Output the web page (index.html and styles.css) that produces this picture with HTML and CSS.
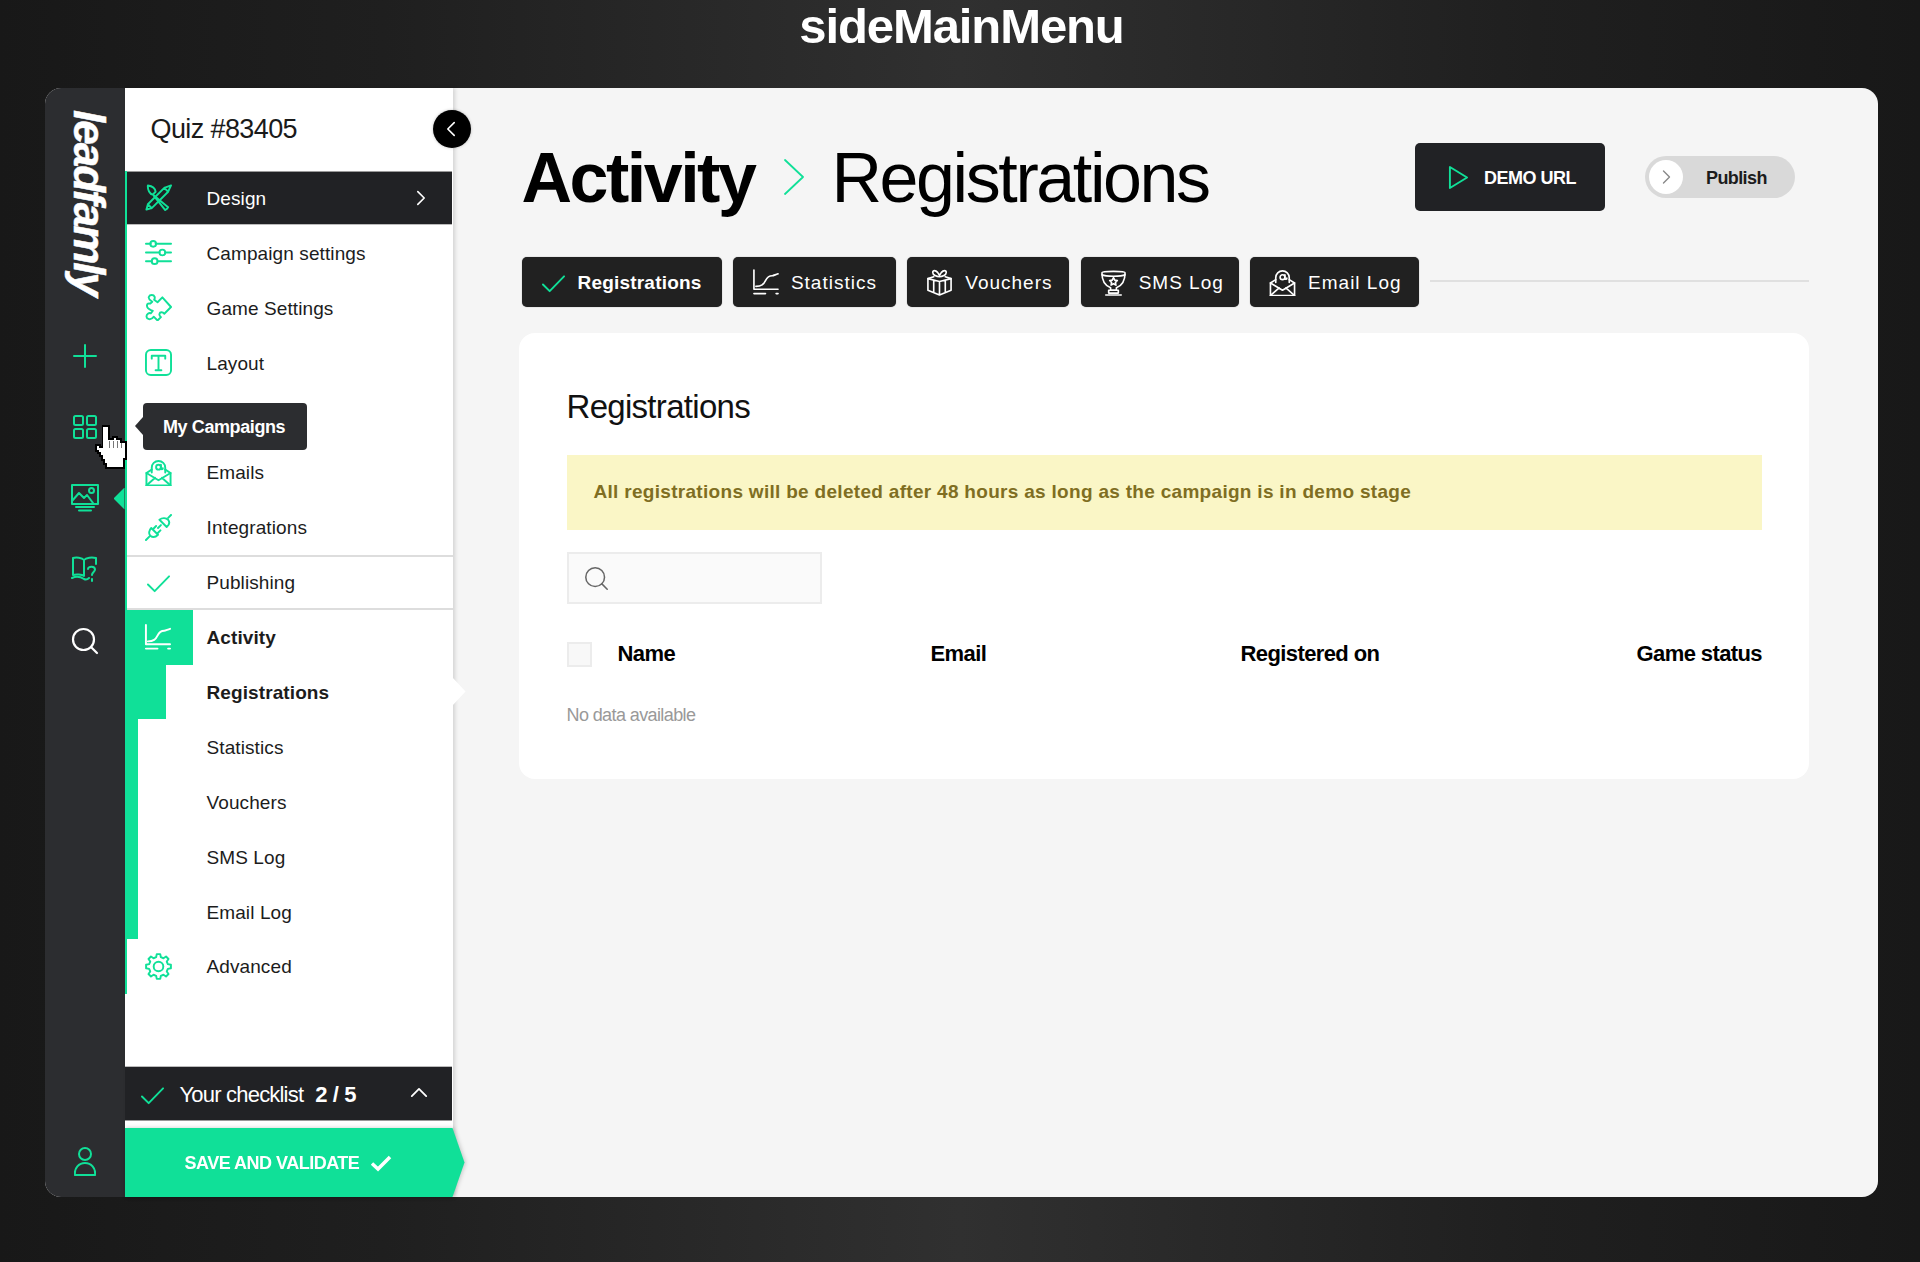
FILE: index.html
```html
<!DOCTYPE html>
<html lang="en">
<head>
<meta charset="utf-8">
<title>sideMainMenu</title>
<link rel="stylesheet" href="styles.css">
</head>
<body>
<svg class="sprite" aria-hidden="true">
  <defs>
    <symbol id="i-design" viewBox="0 0 28 28"><path d="M27 1.500 20 4 3 21 1.500 26.500 7 25 24 8ZM20 4l4 4M3 21l4 4"/><path d="M3 1.500c4 .5 7.500 3 8 6.500l-3 3C5 10.500 2.500 6 3 1.500ZM8 11l16 13-1.500 2-1.500 1-12-15"/></symbol>
    <symbol id="i-sliders" viewBox="0 0 28 28"><path d="M1 5h5M11 5h16M1 14h14M21 14h6M1 23h6M13 23h14"/><circle cx="8.500" cy="5" r="3"/><circle cx="18" cy="14" r="3"/><circle cx="10" cy="23" r="3"/></symbol>
    <symbol id="i-puzzle" viewBox="0 0 28 28"><path d="M18 3.500 27 13.500 20 20.500C18.500 18.500 15.500 18.500 15 20.500 14.500 22 15.500 23 16.500 24L13 27.500 9 23.500C8 25 6.500 26.500 4 26 1 25.500 1 22 3 20.500 4 19.800 5 19.500 6 20L8 17.500C6 16.500 2 16 2 12 2 10 4 9.500 5.500 10L7.500 8C5.500 6.500 3 5 4 3 5 .5 9 .5 10 3 10.300 4 10 5 9.500 6L13 8.500Z"/></symbol>
    <symbol id="i-layout" viewBox="0 0 28 28"><rect x="1" y="1" width="26" height="26" rx="5"/><path d="M7 10V7h14v3M14 7v15M11 22h6"/></symbol>
    <symbol id="i-mail" viewBox="0 0 28 28"><path d="M7 11 1.500 14.500V27.500H26.500V14.500L21 11"/><path d="M1.500 14.500 14 22l12.500-7.500M1.500 27.500 10.500 19.500M26.500 27.500 17.500 19.500"/><path d="M7 14V9a7 7 0 1 1 14 0v5"/><circle cx="14" cy="8.500" r="2.500"/><path d="M16.500 6v3.500c0 1.500 2 1.500 2 0"/></symbol>
    <symbol id="i-plug" viewBox="0 0 28 28"><path d="M1 27l4-4M27 1l-3 3M11.500 12.500l-3 3M16 17l-3 3M13.500 14.500l3-3"/><path d="M6.500 14.500 13.500 21.500C11 24 8 24.500 5.500 22.500 3.500 20.500 4 17 6.500 14.500Z"/><path d="M15 6l7.500 7.500C25.500 11 25.500 8 24 6 22 4 18 3.500 15 6Z"/></symbol>
    <symbol id="i-check" viewBox="0 0 24 18"><path d="M1 9.500 8 16.500 23 1"/></symbol>
    <symbol id="i-chart" viewBox="0 0 28 28"><path d="M2 1V21H27"/><path d="M4 18C10 18 12 16 14 12 16 8 19 7 21 7 22 7 24 6 27 5"/><path d="M2 25.500H14M25 25.500h2"/></symbol>
    <symbol id="i-gear" viewBox="0 0 28 28"><polygon transform="translate(14 14)" points="12.870,-1.810 12.870,1.810 9.700,2.420 8.570,5.150 10.380,7.820 7.820,10.380 5.150,8.570 2.420,9.700 1.810,12.870 -1.810,12.870 -2.420,9.700 -5.150,8.570 -7.820,10.380 -10.380,7.820 -8.570,5.150 -9.700,2.420 -12.870,1.810 -12.870,-1.810 -9.700,-2.420 -8.570,-5.150 -10.380,-7.820 -7.820,-10.380 -5.150,-8.570 -2.420,-9.700 -1.810,-12.870 1.810,-12.870 2.420,-9.700 5.150,-8.570 7.820,-10.380 10.380,-7.820 8.570,-5.150 9.700,-2.420"/><circle cx="14" cy="14" r="5"/></symbol>
    <symbol id="i-gift" viewBox="0 0 28 28"><path d="M2 10 14 13 26 10V22L14 27 2 22ZM14 13V27M8 11.500V24.500M20 11.500V24.500"/><path d="M2 10 8 8M26 10 20 8"/><path d="M14 8C11 8 7 6 7 3.500 7 1 10 1 12 3.500L14 6.500 16 3.500C18 1 21 1 21 3.500 21 6 17 8 14 8Z"/></symbol>
    <symbol id="i-trophy" viewBox="0 0 28 28"><path d="M2 4C2 2 26 2 26 4 26 10 24 17 17 19.500V22H11V19.500C4 17 2 10 2 4Z"/><path d="M2 6C6 8 22 8 26 6M9 22H19V25H9ZM6 27H22"/><path d="M14 9l1.300 2.600 2.700.3-2 2 .5 2.800-2.500-1.300-2.500 1.300.5-2.800-2-2 2.700-.3Z"/></symbol>
    <symbol id="i-play" viewBox="0 0 22 26"><path d="M2 2V24L20 13Z"/></symbol>
    <symbol id="i-search" viewBox="0 0 28 28"><circle cx="12.500" cy="12.500" r="10.500"/><path d="M20 20l6 6"/></symbol>
  </defs>
</svg>

<h1 class="page-title">sideMainMenu</h1>

<div class="window">
  <nav class="rail">
    <div class="logo">leadfamly</div>
    <a class="rail-item"><svg class="ic ic-rail" viewBox="0 0 24 24"><path d="M12 1V23M1 12H23"/></svg></a>
    <a class="rail-item"><svg class="ic ic-rail" viewBox="0 0 24 24"><rect x="1" y="1" width="9" height="9" rx="1.500"/><rect x="14" y="1" width="9" height="9" rx="1.500"/><rect x="1" y="14" width="9" height="9" rx="1.500"/><rect x="14" y="14" width="9" height="9" rx="1.500"/></svg></a>
    <a class="rail-item rail-active"><svg class="ic ic-rail-lg" viewBox="0 0 28 28"><rect x="1" y="1" width="26" height="19"/><path d="M1 17 8 9l5 5 3-3 6 8"/><circle cx="20.500" cy="6.500" r="2.500"/><path d="M5 23H23M8 26.500H20"/></svg></a>
    <a class="rail-item"><svg class="ic ic-rail-lg" viewBox="0 0 28 28"><path d="M13 5C11 2.500 5 2 2 3V20C5 19 11 19.500 13 21ZM13 5C15 2.500 21 2 25 3V9"/><path d="M1 23C5 21 10 22 13 24 15 25 17 24 18 23"/><path d="M17 14c0-3 7-3 7 .5 0 2.500-3 2.500-3 5.500M21 24v2"/></svg></a>
    <a class="rail-item rail-white"><svg class="ic ic-rail-lg ic-bold"><use href="#i-search"/></svg></a>
    <a class="rail-item rail-user"><svg class="ic ic-user" viewBox="0 0 22 30"><circle cx="11" cy="7" r="6"/><path d="M1 28C0 21 5 16 11 16S22 21 21 28Z"/></svg></a>
  </nav>

  <aside class="side">
    <header class="side-head">
      <span class="quiz">Quiz #83405</span>
      <button class="collapse"><svg class="ic ic-chev" viewBox="0 0 12 20"><path d="M10 2 2 10l8 8"/></svg></button>
    </header>

    <ul class="menu">
      <li class="row row-dark"><span class="cell"><svg class="ic ic-menu"><use href="#i-design"/></svg></span><span class="label">Design</span><svg class="ic ic-more" viewBox="0 0 12 20"><path d="M2 2l8 8-8 8"/></svg></li>
      <li class="row"><span class="cell"><svg class="ic ic-menu"><use href="#i-sliders"/></svg></span><span class="label">Campaign settings</span></li>
      <li class="row"><span class="cell"><svg class="ic ic-menu"><use href="#i-puzzle"/></svg></span><span class="label">Game Settings</span></li>
      <li class="row"><span class="cell"><svg class="ic ic-menu"><use href="#i-layout"/></svg></span><span class="label">Layout</span></li>
      <li class="row"></li>
      <li class="row"><span class="cell"><svg class="ic ic-menu"><use href="#i-mail"/></svg></span><span class="label">Emails</span></li>
      <li class="row"><span class="cell"><svg class="ic ic-menu"><use href="#i-plug"/></svg></span><span class="label">Integrations</span></li>
      <li class="row row-lined"><span class="cell"><svg class="ic ic-tick"><use href="#i-check"/></svg></span><span class="label">Publishing</span></li>
      <li class="row row-active"><span class="cell cell-green"><svg class="ic ic-menu ic-white"><use href="#i-chart"/></svg></span><span class="label label-bold">Activity</span></li>
      <li class="row row-sub row-current"><span class="bar"></span><span class="label label-bold">Registrations</span></li>
      <li class="row row-sub"><span class="bar"></span><span class="label">Statistics</span></li>
      <li class="row row-sub"><span class="bar"></span><span class="label">Vouchers</span></li>
      <li class="row row-sub"><span class="bar"></span><span class="label">SMS Log</span></li>
      <li class="row row-sub"><span class="bar"></span><span class="label">Email Log</span></li>
      <li class="row"><span class="cell"><svg class="ic ic-menu"><use href="#i-gear"/></svg></span><span class="label">Advanced</span></li>
    </ul>

    <div class="checklist">
      <svg class="ic ic-tick"><use href="#i-check"/></svg>
      <span class="check-text">Your checklist</span>
      <b class="check-count">2 / 5</b>
      <svg class="ic ic-up" viewBox="0 0 20 12"><path d="M2 10l8-8 8 8"/></svg>
    </div>

    <div class="save-wrap">
      <button class="save"><span class="save-text">SAVE AND VALIDATE</span> <svg class="ic-save" viewBox="0 0 22 18"><path d="M2 9.500 8 15 20 3"/></svg></button>
    </div>
  </aside>

  <main class="main">
    <header class="top">
      <div class="crumbs">
        <span class="crumb-strong">Activity</span>
        <svg class="ic ic-crumb" viewBox="0 0 20 36"><path d="M1 1 19 18 1 35"/></svg>
        <span class="crumb-light">Registrations</span>
      </div>
      <div class="actions">
        <button class="demo"><svg class="ic ic-play"><use href="#i-play"/></svg><span class="btn-text">DEMO URL</span></button>
        <button class="publish"><span class="knob"><svg class="ic ic-knob" viewBox="0 0 12 20"><path d="M2 2l8 8-8 8"/></svg></span><span class="btn-text">Publish</span></button>
      </div>
    </header>

    <div class="tabs">
      <a class="tab tab-on"><svg class="ic ic-tick"><use href="#i-check"/></svg><span class="tab-text">Registrations</span></a>
      <a class="tab"><svg class="ic ic-tab"><use href="#i-chart"/></svg><span class="tab-text">Statistics</span></a>
      <a class="tab"><svg class="ic ic-tab"><use href="#i-gift"/></svg><span class="tab-text">Vouchers</span></a>
      <a class="tab"><svg class="ic ic-tab"><use href="#i-trophy"/></svg><span class="tab-text">SMS Log</span></a>
      <a class="tab"><svg class="ic ic-tab"><use href="#i-mail"/></svg><span class="tab-text">Email Log</span></a>
      <span class="tab-line"></span>
    </div>

    <section class="card">
      <h2 class="card-title">Registrations</h2>
      <p class="notice">All registrations will be deleted after 48 hours as long as the campaign is in demo stage</p>
      <div class="search"><svg class="ic ic-find"><use href="#i-search"/></svg></div>
      <div class="thead">
        <span class="checkbox"></span>
        <span>Name</span>
        <span>Email</span>
        <span>Registered on</span>
        <span>Game status</span>
      </div>
      <p class="empty">No data available</p>
    </section>
  </main>

  <div class="tooltip">My Campaigns</div>
  <svg class="hand" viewBox="0 0 32 44"><path d="M7.500 1H14V14H18V12H22V14H26V17H31V34H29V43H11V39H9V35H7V31H5V28H3V26H1V20H5V22H7.500Z"/><path d="M14 16V23M18 16V23M22 16V23M26 18V23"/></svg>
</div>
</body>
</html>
```
FILE: styles.css
```css
* { box-sizing: border-box; }
html, body { margin: 0; height: 100%; }
body {
  height: 1262px;
  overflow: hidden;
  font-family: "Liberation Sans", Arial, sans-serif;
  color: #1c1c1c;
  background: linear-gradient(90deg, #181818 0%, #1f1f1f 20%, #303030 50%, #1f1f1f 80%, #181818 100%);
}
.sprite { position: absolute; width: 0; height: 0; }
ul { list-style: none; margin: 0; padding: 0; }
button { font-family: inherit; border: 0; padding: 0; }

.page-title {
  margin: 0;
  height: 88px;
  padding: 1px 0 0 3px;
  text-align: center;
  font-size: 49px;
  line-height: 50px;
  font-weight: 700;
  letter-spacing: -1.100px;
  color: #fff;
}

.window {
  position: relative;
  display: flex;
  width: 1833px;
  height: 1109px;
  margin-left: 45px;
  border-radius: 16px;
  background: #f5f5f5;
}

/* icon base */
.ic { fill: none; stroke: currentColor; stroke-width: 2; stroke-linecap: round; stroke-linejoin: round; flex: none; }

/* rail */
.rail {
  flex: 0 0 79.500px;
  display: flex;
  flex-direction: column;
  align-items: stretch;
  background: #2c2d30;
  border-radius: 16px 0 0 16px;
  color: #10e098;
}
.logo {
  height: 232px;
  margin: 0 -4px 0 4px;
  padding-top: 22px;
  writing-mode: vertical-rl;
  font-size: 44px;
  line-height: 79px;
  font-weight: 700;
  font-style: italic;
  letter-spacing: -2px;
  color: #fff;
  -webkit-text-stroke: .5px #fff;
}
.rail-item {
  position: relative;
  height: 71.250px;
  display: flex;
  align-items: center;
  justify-content: center;
}
.rail-white { color: #fff; }
.rail-user { margin-top: auto; height: 70px; }
.rail-active::after {
  content: "";
  position: absolute;
  right: 0;
  top: 25px;
  width: 11px;
  height: 22px;
  background: #10e098;
  clip-path: polygon(0 50%, 100% 0, 100% 100%);
}
.ic-rail { width: 24px; height: 24px; }
.ic-rail-lg { width: 28px; height: 28px; }
.ic-bold { stroke-width: 2.200px; }
.ic-user { width: 22px; height: 30px; }

/* sidebar */
.side {
  position: relative;
  z-index: 2;
  flex: 0 0 328px;
  display: flex;
  flex-direction: column;
  background: #fff;
  box-shadow: 2px 0 4px rgba(0,0,0,.14);
}
.side-head {
  position: relative;
  flex: 0 0 82.500px;
  display: flex;
  align-items: center;
  padding-left: 26px;
}
.quiz { font-size: 27px; letter-spacing: -0.600px; color: #1a1a1a; }
.collapse {
  position: absolute;
  right: -18px;
  top: 22px;
  width: 38px;
  height: 38px;
  border-radius: 50%;
  background: #000;
  color: #fff;
  display: flex;
  align-items: center;
  justify-content: center;
  box-shadow: 0 0 3px rgba(0,0,0,.25);
}
.ic-chev { width: 10px; height: 16px; margin-right: 2px; }

.menu { border-left: 2px solid #10e098; flex: 0 0 823.500px; color: #10e098; }
.row {
  position: relative;
  height: 54.900px;
  display: flex;
  align-items: center;
  font-size: 19px;
  letter-spacing: .100px;
  color: #1c1c1c;
}
.cell {
  flex: 0 0 64px;
  height: 100%;
  display: flex;
  align-items: center;
  justify-content: center;
  color: #10e098;
}
.label { margin-left: 16px; padding-top: 2px; }
.label-bold { font-weight: 700; }
.ic-menu { width: 27px; height: 27px; }
.ic-tick { width: 23px; height: 18px; margin-top: 4px; color: #10e098; }
.ic-white { color: #fff; }
.ic-more { width: 10px; height: 16px; margin-left: auto; margin-right: 26px; color: #fff; }

.row-dark { background: #212225; color: #fff; margin-right: 1px; border-top: 1px solid #999; border-bottom: 1px solid #bbb; }
.row-lined { border-top: 2px solid #ddd; border-bottom: 2px solid #ddd; }
.row-active .cell-green { flex-basis: 68px; margin-left: -2px; padding-right: 2px; background: #10e098; }
.row-active .label { margin-left: 14px; }
.row-sub { display: grid; grid-template-columns: 80px 1fr; align-items: center; }
.row-sub .label { margin-left: 0; }
.bar { height: 100%; background: #10e098; margin-left: -2px; width: 13px; }
.row-current .bar { width: 41px; }
.row-current::after {
  content: "";
  position: absolute;
  right: -13px;
  top: 13px;
  width: 13px;
  height: 28px;
  background: #fff;
  clip-path: polygon(0 0, 100% 50%, 0 100%);
}

.checklist {
  display: flex;
  align-items: center;
  height: 55px;
  margin-top: auto;
  margin-right: 1px;
  padding-left: 16px;
  background: #212225;
  color: #fff;
  border-top: 1px solid #bbb;
  border-bottom: 1px solid #999;
}
.check-text { margin-left: 16px; padding-top: 2px; font-size: 22px; letter-spacing: -0.800px; }
.check-count { margin-left: 12px; padding-top: 2px; font-size: 22px; font-weight: 700; letter-spacing: -0.400px; }
.ic-up { width: 18px; height: 11px; margin-left: auto; margin-right: 24px; margin-bottom: 3px; }

.save-wrap { margin-top: 7px; margin-right: -12px; filter: drop-shadow(1px 0 2px rgba(0,0,0,.2)); }
.save {
  display: flex;
  align-items: center;
  gap: 11px;
  width: 340px;
  height: 69px;
  padding-left: 60px;
  background: #10e098;
  color: #fff;
  font-size: 18px;
  font-weight: 700;
  letter-spacing: -0.500px;
  clip-path: polygon(0 0, 328px 0, 340px 50%, 328px 100%, 0 100%);
}
.save-text { padding-top: 2px; }
.ic-save { width: 22px; height: 18px; fill: none; stroke: #fff; stroke-width: 3.500px; }

/* main */
.main { flex: 1; min-width: 0; padding: 55px 69px 0 66px; }
.top { display: flex; justify-content: space-between; align-items: center; margin: 0 14px 46px 3px; height: 68px; }
.crumbs { display: flex; align-items: center; }
.crumb-strong { padding-top: 1px; font-size: 70px; font-weight: 700; letter-spacing: -2.500px; color: #000; line-height: 68px; }
.ic-crumb { width: 20px; height: 36px; margin: 0 27px 0 30px; color: #10e098; stroke-width: 1.800px; }
.crumb-light { padding-top: 1px; font-size: 70px; letter-spacing: -2.400px; color: #000; line-height: 68px; }
.actions { display: flex; align-items: center; gap: 40px; }
.btn-text { padding-top: 2px; }
.demo {
  display: flex;
  align-items: center;
  gap: 15px;
  width: 190px;
  height: 68px;
  padding-left: 33px;
  border-radius: 5px;
  background: #212225;
  color: #fff;
  font-size: 18px;
  font-weight: 700;
  letter-spacing: -0.500px;
}
.ic-play { width: 21px; height: 25px; color: #10e098; }
.publish {
  display: flex;
  align-items: center;
  width: 150px;
  height: 42px;
  padding-left: 4px;
  border-radius: 21px;
  background: #d9d9d9;
  color: #1c1c1c;
  font-size: 18px;
  font-weight: 700;
  letter-spacing: -0.600px;
}
.knob {
  width: 34px;
  height: 34px;
  margin-right: 23px;
  border-radius: 50%;
  background: #fff;
  display: flex;
  align-items: center;
  justify-content: center;
  color: #888;
}
.ic-knob { width: 9px; height: 16px; stroke-width: 1.800px; }

.tabs {
  display: grid;
  grid-template-columns: 200px 163px 162px 158px 169px 1fr;
  align-items: center;
  gap: 11.400px;
  margin-left: 3px;
  height: 50px;
}
.tab {
  display: flex;
  align-items: center;
  gap: 12px;
  height: 50px;
  padding-left: 19px;
  border-radius: 5px;
  background: #212121;
  color: #fff;
  font-size: 19px;
  letter-spacing: 1px;
  white-space: nowrap;
  box-shadow: 0 0 1px rgba(0,0,0,.5);
}
.tab-text { padding-top: 2px; }
.tab-on { font-weight: 700; letter-spacing: .200px; gap: 13px; padding-left: 20px; }
.ic-tab { width: 27px; height: 27px; stroke-width: 1.700px; }
.tab-line { height: 2px; background: #e0e0e0; margin-bottom: 2px; }

.card {
  margin-top: 26px;
  height: 446px;
  padding: 50px 47px 0 48px;
  border-radius: 16px;
  background: #fff;
}
.card-title { margin: 0 0 24px; font-size: 33px; line-height: 48px; font-weight: 400; letter-spacing: -0.700px; color: #111; }
.notice {
  margin: 0 0 22px;
  height: 75px;
  padding-left: 27px;
  line-height: 74px;
  background: #faf6c6;
  color: #7f6e22;
  font-size: 19px;
  font-weight: 700;
  letter-spacing: .300px;
}
.search {
  display: flex;
  align-items: center;
  width: 255px;
  height: 52px;
  padding-left: 15px;
  background: #fafafa;
  border: 2px solid #ececec;
}
.ic-find { width: 25px; height: 25px; color: #666; stroke-width: 1.700px; }
.thead {
  display: grid;
  grid-template-columns: 51px 313px 310px 1fr auto;
  align-items: center;
  height: 25px;
  margin-top: 36px;
  padding-top: 1px;
  font-size: 22px;
  font-weight: 700;
  letter-spacing: -0.600px;
  color: #000;
}
.checkbox { width: 25px; height: 25px; background: #f8f8f8; border: 2px solid #ececec; }
.empty { margin: 38px 0 0; font-size: 18px; line-height: 24px; color: #999; letter-spacing: -0.600px; }

/* overlays */
.tooltip {
  position: absolute;
  z-index: 4;
  left: 98px;
  top: 315px;
  width: 164px;
  height: 47px;
  line-height: 48px;
  padding-left: 20px;
  border-radius: 4px;
  background: #2c2d30;
  color: #fff;
  font-size: 18px;
  font-weight: 700;
  letter-spacing: -0.400px;
}
.tooltip::before {
  content: "";
  position: absolute;
  left: -8px;
  top: 14px;
  width: 8px;
  height: 18px;
  background: #2c2d30;
  clip-path: polygon(100% 0, 0 50%, 100% 100%);
}
.hand {
  position: absolute;
  z-index: 5;
  left: 50px;
  top: 337px;
  width: 32px;
  height: 44px;
  shape-rendering: crispEdges;
}
.hand path { fill: #fff; stroke: #000; stroke-width: 1.500px; }
.hand path + path { fill: none; stroke: #777; stroke-width: 1; }
```
